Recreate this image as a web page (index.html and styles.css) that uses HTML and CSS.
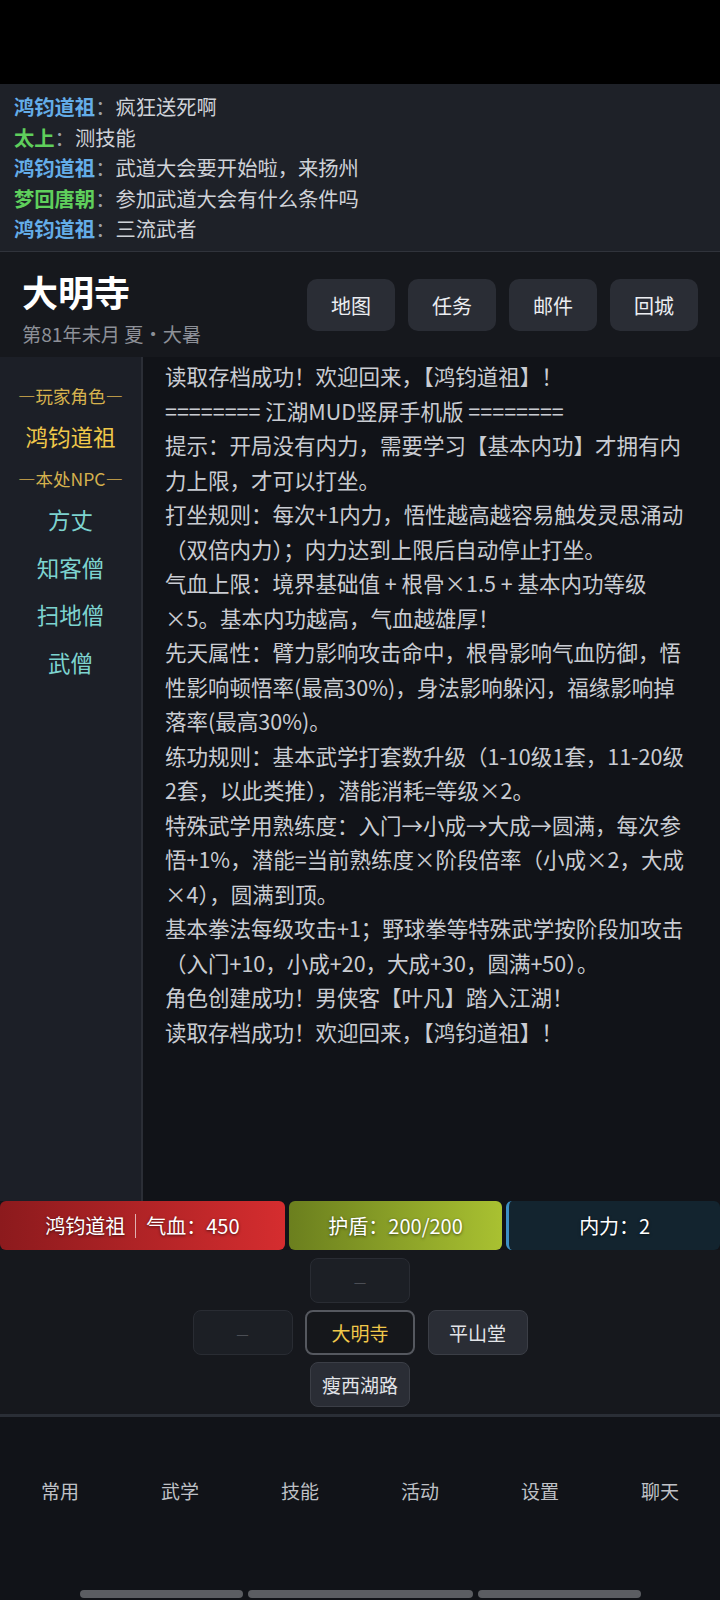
FILE: index.html
```html
<!DOCTYPE html>
<html lang="zh-CN">
<head>
  <meta charset="UTF-8" />
  <meta name="viewport" content="width=device-width, initial-scale=1" />
  <title>江湖MUD</title>
  <link rel="stylesheet" href="styles.css">
</head>
<body>
<div class="notch"></div>

<div class="chat">
  <div class="msg"><span class="name blue">鸿钧道祖</span><span class="colon">：</span>疯狂送死啊</div>
  <div class="msg"><span class="name green">太上</span><span class="colon">：</span>测技能</div>
  <div class="msg"><span class="name blue">鸿钧道祖</span><span class="colon">：</span>武道大会要开始啦，来扬州</div>
  <div class="msg"><span class="name green">梦回唐朝</span><span class="colon">：</span>参加武道大会有什么条件吗</div>
  <div class="msg"><span class="name blue">鸿钧道祖</span><span class="colon">：</span>三流武者</div>
</div>

<header class="room">
  <div class="room-info">
    <h1>大明寺</h1>
    <div class="time">第81年未月 夏・大暑</div>
  </div>
  <div class="actions">
    <button>地图</button>
    <button>任务</button>
    <button>邮件</button>
    <button>回城</button>
  </div>
</header>

<div class="main">
  <aside class="side">
    <div class="label">—玩家角色—</div>
    <div class="player">鸿钧道祖</div>
    <div class="label npc-label">—本处NPC—</div>
    <div class="npc first">方丈</div>
    <div class="npc">知客僧</div>
    <div class="npc">扫地僧</div>
    <div class="npc">武僧</div>
  </aside>
  <div class="log">
    <p>读取存档成功！欢迎回来，【鸿钧道祖】！</p>
    <p>======== 江湖MUD竖屏手机版 ========</p>
    <p>提示：开局没有内力，需要学习【基本内功】才拥有内力上限，才可以打坐。</p>
    <p>打坐规则：每次+1内力，悟性越高越容易触发灵思涌动（双倍内力）；内力达到上限后自动停止打坐。</p>
    <p>气血上限：境界基础值 + 根骨×1.5 + 基本内功等级×5。基本内功越高，气血越雄厚！</p>
    <p>先天属性：臂力影响攻击命中，根骨影响气血防御，悟性影响顿悟率(最高30%)，身法影响躲闪，福缘影响掉落率(最高30%)。</p>
    <p>练功规则：基本武学打套数升级（1-10级1套，11-20级2套，以此类推），潜能消耗=等级×2。</p>
    <p>特殊武学用熟练度：入门→小成→大成→圆满，每次参悟+1%，潜能=当前熟练度×阶段倍率（小成×2，大成×4），圆满到顶。</p>
    <p>基本拳法每级攻击+1；野球拳等特殊武学按阶段加攻击（入门+10，小成+20，大成+30，圆满+50）。</p>
    <p>角色创建成功！男侠客【叶凡】踏入江湖！</p>
    <p>读取存档成功！欢迎回来，【鸿钧道祖】！</p>
  </div>
</div>

<div class="bars">
  <div class="bar hp">鸿钧道祖<span class="sep"></span>气血：450</div>
  <div class="bar shield">护盾：200/200</div>
  <div class="bar mp">内力：2</div>
</div>

<div class="map">
  <div class="exit empty up">—</div>
  <div class="exit empty left">—</div>
  <div class="exit here">大明寺</div>
  <div class="exit right">平山堂</div>
  <div class="exit down">瘦西湖路</div>
</div>

<nav class="tabs">
  <div class="tab-row">
    <div>常用</div>
    <div>武学</div>
    <div>技能</div>
    <div>活动</div>
    <div>设置</div>
    <div>聊天</div>
  </div>
  <div class="gesture">
    <span class="g1"></span><span class="g2"></span><span class="g3"></span>
  </div>
</nav>
</body>
</html>
```

FILE: styles.css
```css
* { box-sizing: border-box; }
body {
  margin: 0;
  width: 720px;
  height: 1600px;
  overflow: hidden;
  font-family: "Noto Sans CJK SC", "Noto Sans", sans-serif;
  background: #111318;
  color: #cfd2d8;
}
.notch {
  height: 84px;
  background: #000;
}

/* chat */
.chat {
  height: 168px;
  background: #1e2128;
  border-bottom: 1px solid #30333b;
  padding: 7px 14px 0;
  font-size: 20.3px;
  line-height: 30.6px;
}
.msg { color: #cfd2d8; white-space: nowrap; }
.name { font-weight: bold; }
.name.blue { color: #64ade8; }
.name.green { color: #5fcf5c; }
.colon { color: #9aa0a8; }

/* room header */
.room {
  height: 105px;
  background: #16181d;
  display: flex;
  justify-content: space-between;
  align-items: flex-start;
  padding: 18px 22px 0;
}
.room h1 {
  margin: 0;
  font-size: 36px;
  line-height: 42px;
  font-weight: bold;
  color: #fff;
}
.time {
  margin-top: 10px;
  font-size: 19.2px;
  line-height: 24px;
  color: #8d9098;
}
.actions {
  display: flex;
  gap: 13px;
  margin-top: 9px;
}
.actions button {
  width: 88px;
  height: 52px;
  border: none;
  border-radius: 10px;
  background: #2a2d35;
  color: #eceef2;
  font-family: inherit;
  font-size: 20px;
}

/* main */
.main {
  height: 844px;
  display: flex;
}
.side {
  width: 143px;
  flex: none;
  background: #1c1f27;
  border-right: 2px solid #2b2e36;
  padding-top: 26px;
  text-align: center;
}
.label {
  font-size: 17.5px;
  line-height: 26px;
  color: #d6b24e;
}
.player {
  margin-top: 7px;
  font-size: 22.5px;
  line-height: 40px;
  color: #f0c84a;
}
.npc-label { margin-top: 10px; }
.npc {
  font-size: 22.5px;
  line-height: 47.7px;
  color: #7dd3cf;
}
.npc.first { margin-top: 4px; }
.log {
  flex: 1;
  padding: 2px 30px 0 22px;
  font-size: 21.5px;
  line-height: 34.5px;
  color: #c9ccd2;
}
.log p { margin: 0; }

/* status bars */
.bars {
  height: 49px;
  display: grid;
  grid-template-columns: 4fr 3fr 3fr;
  gap: 4px;
}
.bar {
  border-radius: 6px;
  display: flex;
  align-items: center;
  justify-content: center;
  font-size: 20px;
  color: #fff;
  text-shadow: 0 1px 3px rgba(0,0,0,0.6);
}
.bar.hp { background: linear-gradient(90deg, #8c1a1d, #d52d2f); }
.bar.shield { background: linear-gradient(90deg, #6b7f1e, #a9c131); }
.bar.mp {
  background: #13242f;
  border-left: 3px solid #3d8fc4;
}
.sep {
  display: inline-block;
  width: 1px;
  height: 24px;
  background: #e0b0b0;
  margin: 0 10px;
}

/* map */
.map {
  height: 164px;
  background: #16181d;
  padding-top: 8px;
  display: grid;
  grid-template-columns: 100px 100px 100px;
  grid-template-rows: 45px 45px 45px;
  column-gap: 17.5px;
  row-gap: 7px;
  justify-content: center;
}
.exit {
  display: flex;
  align-items: center;
  justify-content: center;
  border-radius: 8px;
  background: #2a2d35;
  border: 1.5px solid #3b3e46;
  color: #e2e4e8;
  font-size: 19px;
}
.exit.empty {
  background: #1c1f25;
  border-color: #292c33;
  color: #4b4e55;
  font-size: 14px;
}
.exit.up { grid-column: 2; grid-row: 1; }
.exit.left { grid-column: 1; grid-row: 2; }
.exit.here {
  grid-column: 2;
  grid-row: 2;
  margin: 0 -5px;
  background: #15171b;
  border: 2px solid #55585f;
  color: #f0c84a;
}
.exit.right { grid-column: 3; grid-row: 2; }
.exit.down { grid-column: 2; grid-row: 3; }

/* bottom tabs */
.tabs {
  height: 186px;
  background: #111318;
  border-top: 3px solid #2a2e36;
  display: flex;
  flex-direction: column;
}
.tab-row {
  display: grid;
  grid-template-columns: repeat(6, 1fr);
  padding-top: 60px;
  text-align: center;
  font-size: 19px;
  line-height: 28px;
  color: #bfc1c6;
}
.gesture {
  margin-top: auto;
  margin-bottom: 2px;
  display: flex;
  justify-content: center;
  gap: 5px;
}
.gesture span {
  height: 8px;
  border-radius: 4px;
  background: #5b5d62;
}
.gesture .g1 { width: 163px; }
.gesture .g2 { width: 225px; }
.gesture .g3 { width: 163px; }
```
